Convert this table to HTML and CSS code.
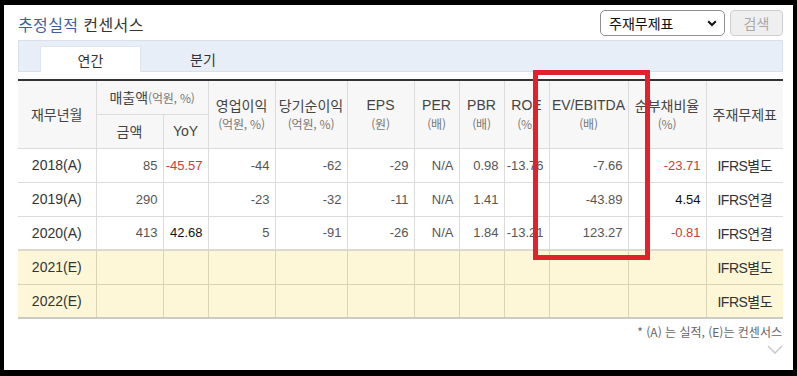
FILE: index.html
```html
<!DOCTYPE html>
<html lang="ko">
<head>
<meta charset="utf-8">
<link rel="stylesheet" href="styles.css">
</head>
<body>
<div class="panel">
  <div class="top">
    <h2 class="title"><span class="title-key">추정실적</span> 컨센서스</h2>
    <div class="controls">
      <div class="select">
        <span>주재무제표</span>
        <svg width="10" height="7" viewBox="0 0 10 7"><path d="M1.2 1.2 L5 5 L8.8 1.2" fill="none" stroke="#111" stroke-width="2"/></svg>
      </div>
      <div class="btn">검색</div>
    </div>
  </div>
  <div class="tabs">
    <div class="tab active">연간</div>
    <div class="tab second">분기</div>
  </div>
  <table class="grid">
    <colgroup>
      <col style="width:78px"><col style="width:67px"><col style="width:45px"><col style="width:67px"><col style="width:72px"><col style="width:67px"><col style="width:45px"><col style="width:45px"><col style="width:45px"><col style="width:79px"><col style="width:78px"><col style="width:77px">
    </colgroup>
    <thead>
      <tr class="h1">
        <th rowspan="2" class="first">재무년월</th>
        <th colspan="2">매출액<span class="ui">(억원, %)</span></th>
        <th rowspan="2"><span class="l1">영업이익</span><span class="u">(억원, %)</span></th>
        <th rowspan="2"><span class="l1">당기순이익</span><span class="u">(억원, %)</span></th>
        <th rowspan="2" class="lat"><span class="l1">EPS</span><span class="u">(원)</span></th>
        <th rowspan="2" class="lat"><span class="l1">PER</span><span class="u">(배)</span></th>
        <th rowspan="2" class="lat"><span class="l1">PBR</span><span class="u">(배)</span></th>
        <th rowspan="2" class="lat"><span class="l1">ROE</span><span class="u">(%)</span></th>
        <th rowspan="2" class="lat"><span class="l1">EV/EBITDA</span><span class="u">(배)</span></th>
        <th rowspan="2"><span class="l1">순부채비율</span><span class="u">(%)</span></th>
        <th rowspan="2" class="last">주재무제표</th>
      </tr>
      <tr class="h2">
        <th>금액</th>
        <th class="lat">YoY</th>
      </tr>
    </thead>
    <tbody>
      <tr>
        <td class="year first">2018(A)</td><td>85</td><td class="neg">-45.57</td><td>-44</td><td>-62</td><td>-29</td><td>N/A</td><td>0.98</td><td>-13.76</td><td>-7.66</td><td class="neg">-23.71</td><td class="fs last">IFRS별도</td>
      </tr>
      <tr>
        <td class="year first">2019(A)</td><td>290</td><td></td><td>-23</td><td>-32</td><td>-11</td><td>N/A</td><td>1.41</td><td></td><td>-43.89</td><td class="pos">4.54</td><td class="fs last">IFRS연결</td>
      </tr>
      <tr>
        <td class="year first">2020(A)</td><td>413</td><td class="pos">42.68</td><td>5</td><td>-91</td><td>-26</td><td>N/A</td><td>1.84</td><td>-13.21</td><td>123.27</td><td class="neg">-0.81</td><td class="fs last">IFRS연결</td>
      </tr>
      <tr class="est firstest">
        <td class="year first">2021(E)</td><td></td><td></td><td></td><td></td><td></td><td></td><td></td><td></td><td></td><td></td><td class="fs last">IFRS별도</td>
      </tr>
      <tr class="est">
        <td class="year first">2022(E)</td><td></td><td></td><td></td><td></td><td></td><td></td><td></td><td></td><td></td><td></td><td class="fs last">IFRS별도</td>
      </tr>
    </tbody>
  </table>
  <p class="note">* (A) 는 실적, (E)는 컨센서스</p>
  <div class="more">
    <svg width="16" height="9" viewBox="0 0 16 9"><path d="M1 1 L8 8 L15 1" fill="none" stroke="#c4c4c4" stroke-width="1.3"/></svg>
  </div>
  <div class="highlight"></div>
</div>
</body>
</html>
```

FILE: styles.css
```css
* { box-sizing: border-box; }
html, body { margin: 0; }
body {
  width: 797px;
  height: 376px;
  background: #000;
  padding: 5px 4px 6px 4px;
  font-family: "Liberation Sans", "Noto Sans CJK KR", sans-serif;
  color: #333;
  overflow: hidden;
}
.panel {
  position: relative;
  background: #fff;
  height: 100%;
  padding: 0 10px 0 14px;
}
.top {
  height: 35px;
  display: flex;
  align-items: center;
  justify-content: space-between;
}
.title {
  margin: 0;
  font-size: 16px;
  font-weight: normal;
  color: #333;
  font-family: "Noto Sans CJK KR", sans-serif;
  letter-spacing: 0.4px;
  padding-top: 2px;
}
.title-key { color: #3e5f9e; }
.controls {
  display: flex;
  gap: 5px;
  align-items: center;
  padding-top: 1px;
}
.select {
  width: 125px;
  height: 26px;
  border: 1px solid #8f8f8f;
  border-radius: 5px;
  display: flex;
  align-items: center;
  justify-content: space-between;
  padding: 0 7px 0 8px;
  font-size: 14px;
  color: #111;
  font-family: "Noto Sans CJK KR", sans-serif;
  background: #fff;
}
.btn {
  width: 53px;
  height: 26px;
  border: 1px solid #cfcfcf;
  border-radius: 4px;
  background: #efefef;
  color: #a9a9a9;
  font-size: 14px;
  display: flex;
  align-items: center;
  justify-content: center;
  font-family: "Noto Sans CJK KR", sans-serif;
}
.tabs {
  height: 32px;
  border: 1px solid #d9e0ea;
  background: #e8eef8;
  display: flex;
  align-items: flex-end;
  padding-left: 21px;
}
.tab {
  height: 26px;
  margin-bottom: -1px;
  font-size: 14px;
  font-family: "Noto Sans CJK KR", sans-serif;
  color: #333;
  display: flex;
  align-items: center;
  justify-content: center;
}
.tab.active {
  width: 101px;
  background: #fff;
  border: 1px solid #e0e6ee;
  border-bottom: none;
  position: relative;
}
.tab.second { width: 124px; }
.grid {
  margin-top: 7px;
  width: 765px;
  border-collapse: collapse;
  table-layout: fixed;
  border-top: 2px solid #333;
  border-bottom: 2px solid #cbcbc6;
}
.grid th {
  background: #f7f7f7;
  font-weight: normal;
  color: #444;
  font-size: 14px;
  line-height: 18px;
  border: 1px solid #dcdcdc;
  padding: 0;
  text-align: center;
  vertical-align: middle;
  font-family: "Noto Sans CJK KR", sans-serif;
}
.grid th.lat { font-family: "Liberation Sans", "Noto Sans CJK KR", sans-serif; }
.grid tr.h1 th { height: 34px; }
.grid tr.h2 th { height: 34px; }
.grid th .l1 {
  display: block;
  line-height: 20px;
}
.grid th .u {
  display: block;
  font-size: 12px;
  line-height: 18px;
  color: #777;
  font-family: "Noto Sans CJK KR", sans-serif;
  letter-spacing: -0.2px;
}
.grid th .ui {
  font-size: 12px;
  color: #777;
  letter-spacing: -0.2px;
}
.grid td {
  height: 34px;
  border: 1px solid #dcdcdc;
  font-size: 13px;
  color: #555;
  text-align: right;
  padding: 0 5px 0 0;
  white-space: nowrap;
  overflow: hidden;
}
.grid .first { border-left: none; }
.grid .last { border-right: none; }
.grid td.year {
  text-align: center;
  font-size: 14px;
  color: #333;
  padding: 0;
}
.grid td.fs {
  text-align: center;
  font-size: 14px;
  color: #333;
  padding: 0;
  letter-spacing: -0.5px;
}
.grid td.neg { color: #cc3b3b; }
.grid td.pos { color: #111; }
.grid tr.est td {
  background: #fdf7d7;
  border-color: #dad4b6;
}
.grid tr.firstest td { border-top: 2px solid #dedacb; }
.note {
  margin: 5px 0 0;
  text-align: right;
  font-size: 12px;
  color: #666;
  padding-right: 1px;
  font-family: "Noto Sans CJK KR", sans-serif;
  line-height: 16px;
}
.more {
  display: flex;
  justify-content: flex-end;
  margin-top: 5px;
}
.more svg { display: block; }
.highlight {
  position: absolute;
  left: 529px;
  top: 65px;
  width: 117px;
  height: 190px;
  border: 5px solid #e0222a;
}
```
